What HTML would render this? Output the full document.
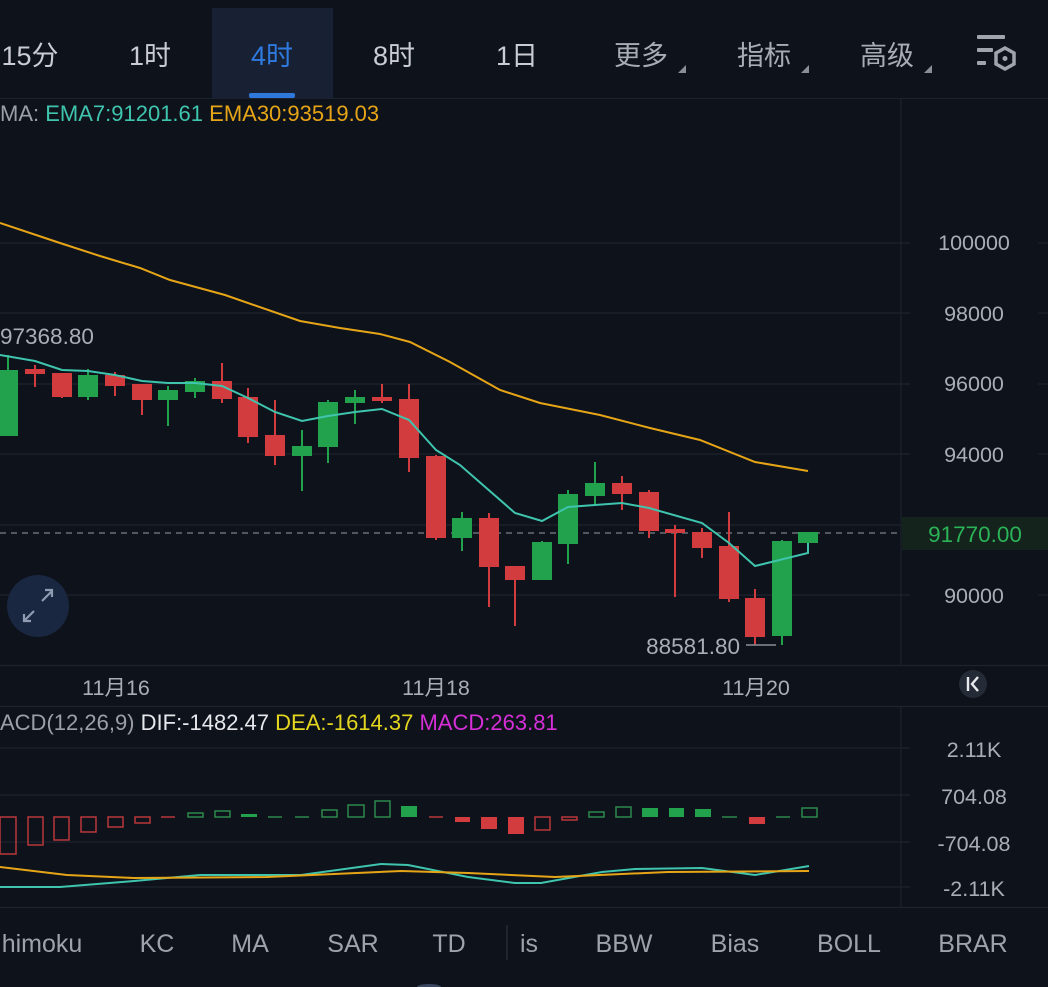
<!DOCTYPE html>
<html><head><meta charset="utf-8"><style>
html,body{margin:0;padding:0;background:#0e121b;width:1048px;height:987px;overflow:hidden}
svg{display:block}
text{font-family:"Liberation Sans","Noto Sans CJK SC",sans-serif}
</style></head><body>
<svg width="1048" height="987" viewBox="0 0 1048 987" xmlns="http://www.w3.org/2000/svg">
<rect width="1048" height="987" fill="#0e121b"/>
<rect x="212" y="8" width="121" height="90" fill="#172133"/>
<rect x="249" y="93" width="46" height="5" rx="2" fill="#2f78dc"/>
<g font-size="27" fill="#c9ccd2" text-anchor="middle">
<text x="30" y="65">15分</text>
<text x="150" y="65">1时</text>
<text x="272" y="65" fill="#2f7ae0">4时</text>
<text x="394" y="65">8时</text>
<text x="517" y="65">1日</text>
<text x="641" y="65" fill="#a8acb4">更多</text>
<text x="764" y="65" fill="#a8acb4">指标</text>
<text x="887" y="65" fill="#a8acb4">高级</text>
</g>
<g fill="#8a8e96"><path d="M678 73h8v-8z"/><path d="M801 73h8v-8z"/><path d="M924 73h8v-8z"/></g>
<g fill="#a0a4ac"><rect x="977" y="35" width="28" height="4" rx="1"/><rect x="977" y="48" width="16" height="4" rx="1"/><rect x="977" y="61" width="9" height="4" rx="1"/></g>
<path d="M1005 48l9 5v11l-9 5l-9-5v-11z" fill="none" stroke="#a0a4ac" stroke-width="3.5"/>
<circle cx="1005" cy="58.5" r="2.5" fill="#a0a4ac"/>
<line x1="0" y1="98.5" x2="1048" y2="98.5" stroke="#1c222d"/>
<text x="0" y="121" font-size="22" fill="#9ba0a8">MA: <tspan fill="#3fc4ae">EMA7:91201.61</tspan> <tspan fill="#e6a517">EMA30:93519.03</tspan></text>
<g stroke="#1d232e" stroke-width="1.2">
<line x1="0" y1="243" x2="910" y2="243"/><line x1="0" y1="313" x2="910" y2="313"/><line x1="0" y1="384" x2="910" y2="384"/><line x1="0" y1="454" x2="910" y2="454"/><line x1="0" y1="525" x2="910" y2="525"/><line x1="0" y1="595" x2="910" y2="595"/>
<line x1="1038" y1="243" x2="1048" y2="243"/><line x1="1038" y1="313" x2="1048" y2="313"/><line x1="1038" y1="384" x2="1048" y2="384"/><line x1="1038" y1="454" x2="1048" y2="454"/><line x1="1038" y1="595" x2="1048" y2="595"/>
<line x1="901" y1="98" x2="901" y2="665"/><line x1="901" y1="706" x2="901" y2="907"/>
<line x1="0" y1="665.5" x2="1048" y2="665.5"/><line x1="0" y1="706.5" x2="1048" y2="706.5"/>
<line x1="0" y1="748" x2="910" y2="748"/><line x1="0" y1="795" x2="910" y2="795"/><line x1="0" y1="842" x2="910" y2="842"/><line x1="0" y1="887" x2="910" y2="887"/>
<line x1="0" y1="907.5" x2="1048" y2="907.5"/>
</g>
<g font-size="21.5" fill="#a9adb5" text-anchor="middle">
<text x="974" y="250">100000</text><text x="974" y="321">98000</text><text x="974" y="391">96000</text><text x="974" y="462">94000</text><text x="974" y="603">90000</text>
<text x="974" y="757">2.11K</text><text x="974" y="804">704.08</text><text x="974" y="851">-704.08</text><text x="974" y="896">-2.11K</text>
<text x="116" y="695">11月16</text><text x="436" y="695">11月18</text><text x="756" y="695">11月20</text>
</g>
<line x1="0" y1="533" x2="900" y2="533" stroke="#6a6f78" stroke-width="1.5" stroke-dasharray="6 5"/>
<rect x="902" y="517" width="146" height="33" fill="#14231c"/>
<text x="975" y="542" font-size="22.5" fill="#2bb358" text-anchor="middle">91770.00</text>
<polyline fill="none" stroke="#e6a517" stroke-width="2" points="0,223 60,243 100,256 140,268 170,280 225,295 300,321 340,328 380,334 410,342 450,362 500,390 540,403 600,415 650,428 700,440 755,462 808,471"/>
<g stroke-width="2">
<g stroke="#22a24c" fill="#22a24c">
<line x1="8" y1="355" x2="8" y2="435"/><rect x="-1" y="371" width="18" height="64"/>
<line x1="88" y1="369" x2="88" y2="400"/><rect x="79" y="376" width="18" height="20"/>
<line x1="168" y1="386" x2="168" y2="426"/><rect x="159" y="391" width="18" height="8"/>
<line x1="195" y1="378" x2="195" y2="398"/><rect x="186" y="382" width="18" height="9"/>
<line x1="302" y1="430" x2="302" y2="491"/><rect x="293" y="447" width="18" height="8"/>
<line x1="328" y1="400" x2="328" y2="463"/><rect x="319" y="403" width="18" height="43"/>
<line x1="355" y1="390" x2="355" y2="424"/><rect x="346" y="398" width="18" height="4"/>
<line x1="462" y1="512" x2="462" y2="551"/><rect x="453" y="519" width="18" height="18"/>
<line x1="542" y1="541" x2="542" y2="580"/><rect x="533" y="543" width="18" height="36"/>
<line x1="568" y1="490" x2="568" y2="564"/><rect x="559" y="495" width="18" height="48"/>
<line x1="595" y1="462" x2="595" y2="505"/><rect x="586" y="484" width="18" height="11"/>
<line x1="782" y1="540" x2="782" y2="645"/><rect x="773" y="542" width="18" height="93"/>
<line x1="808" y1="533" x2="808" y2="553"/><rect x="799" y="533" width="18" height="9"/>
</g>
<g stroke="#d33c3f" fill="#d33c3f">
<line x1="35" y1="365" x2="35" y2="387"/><rect x="26" y="370" width="18" height="3"/>
<line x1="62" y1="374" x2="62" y2="398"/><rect x="53" y="374" width="18" height="22"/>
<line x1="115" y1="372" x2="115" y2="396"/><rect x="106" y="376" width="18" height="9"/>
<line x1="142" y1="385" x2="142" y2="415"/><rect x="133" y="385" width="18" height="14"/>
<line x1="222" y1="363" x2="222" y2="403"/><rect x="213" y="382" width="18" height="16"/>
<line x1="248" y1="388" x2="248" y2="443"/><rect x="239" y="398" width="18" height="38"/>
<line x1="275" y1="400" x2="275" y2="465"/><rect x="266" y="436" width="18" height="19"/>
<line x1="382" y1="384" x2="382" y2="403"/><rect x="373" y="398" width="18" height="2"/>
<line x1="409" y1="384" x2="409" y2="472"/><rect x="400" y="400" width="18" height="57"/>
<line x1="436" y1="455" x2="436" y2="540"/><rect x="427" y="457" width="18" height="80"/>
<line x1="489" y1="513" x2="489" y2="607"/><rect x="480" y="519" width="18" height="47"/>
<line x1="515" y1="567" x2="515" y2="626"/><rect x="506" y="567" width="18" height="12"/>
<line x1="622" y1="476" x2="622" y2="510"/><rect x="613" y="484" width="18" height="9"/>
<line x1="649" y1="490" x2="649" y2="538"/><rect x="640" y="493" width="18" height="37"/>
<line x1="675" y1="525" x2="675" y2="597"/><rect x="666" y="530" width="18" height="2"/>
<line x1="702" y1="528" x2="702" y2="558"/><rect x="693" y="533" width="18" height="14"/>
<line x1="729" y1="512" x2="729" y2="602"/><rect x="720" y="547" width="18" height="51"/>
<line x1="755" y1="589" x2="755" y2="645"/><rect x="746" y="599" width="18" height="37"/>
</g>
</g>
<polyline fill="none" stroke="#3fc4ae" stroke-width="2" points="0,355 35,361 62,370 88,371 115,375 142,381 168,383 195,383 222,386 248,398 275,412 302,421 328,416 355,412 382,409 409,420 436,450 460,465 515,513 542,521 568,507 622,503 649,508 702,523 729,543 755,566 808,553 808,543"/>
<text x="0" y="344" font-size="22.5" fill="#a9adb5">97368.80</text>
<text x="740" y="654" font-size="22.5" fill="#a9adb5" text-anchor="end">88581.80</text>
<line x1="746" y1="645" x2="776" y2="645" stroke="#8a8e96" stroke-width="1.5"/>
<circle cx="38" cy="606" r="31" fill="#1a2740"/>
<g stroke="#8e9bb0" stroke-width="2.2" fill="none"><path d="M42 601l10-10M45 590h7v7"/><path d="M34 611l-10 10M24 614v7h7"/></g>
<circle cx="973" cy="684" r="14" fill="#252b36"/>
<path d="M968 677v14M978 677l-6 7l6 7" stroke="#e8eaee" stroke-width="2.4" fill="none"/>
<text x="0" y="730" font-size="22" fill="#9ba0a8">ACD(12,26,9) <tspan fill="#e6e8ec">DIF:-1482.47</tspan> <tspan fill="#e4d51e">DEA:-1614.37</tspan> <tspan fill="#d62fd8">MACD:263.81</tspan></text>
<g stroke-width="1.5">
<g stroke="#b8383b" fill="none">
<rect x="0" y="817" width="16" height="37"/><rect x="28" y="817" width="15" height="28"/><rect x="54" y="817" width="15" height="23"/><rect x="81" y="817" width="15" height="15"/><rect x="108" y="817" width="15" height="10"/><rect x="135" y="817" width="15" height="6"/><line x1="161" y1="817" x2="175" y2="817"/>
<rect x="535" y="817" width="15" height="13"/><rect x="562" y="817" width="15" height="3"/><line x1="429" y1="817" x2="443" y2="817"/>
</g>
<g fill="#d33c3f"><rect x="455" y="817" width="15" height="5"/><rect x="481" y="817" width="16" height="12"/><rect x="508" y="817" width="16" height="17"/><rect x="749" y="817" width="16" height="7"/></g>
<g stroke="#2c8a4c" fill="none">
<rect x="188" y="813" width="15" height="4"/><rect x="215" y="811" width="15" height="6"/><line x1="268" y1="817" x2="282" y2="817"/><line x1="295" y1="817" x2="309" y2="817"/>
<rect x="322" y="810" width="15" height="7"/><rect x="348" y="805" width="16" height="12"/><rect x="375" y="801" width="15" height="16"/>
<rect x="589" y="812" width="15" height="5"/><rect x="616" y="807" width="15" height="10"/><line x1="722" y1="817" x2="737" y2="817"/><line x1="776" y1="817" x2="790" y2="817"/><rect x="802" y="808" width="15" height="9"/>
</g>
<g fill="#22a24c"><rect x="241" y="814" width="16" height="3"/><rect x="401" y="806" width="16" height="11"/><rect x="642" y="808" width="16" height="9"/><rect x="669" y="808" width="15" height="9"/><rect x="695" y="809" width="16" height="8"/></g>
</g>
<polyline fill="none" stroke="#3fc4ae" stroke-width="2" points="0,887 60,887 134,881 200,875 301,875 381,864 408,865 468,877 515,883 541,883 602,872 635,869 702,868 755,875 809,866"/>
<polyline fill="none" stroke="#e6a517" stroke-width="2" points="0,867 67,875 134,878 267,877 401,871 468,873 555,877 668,872 809,871"/>
<g font-size="25" fill="#9ea2aa" text-anchor="middle">
<text x="42" y="952">himoku</text><text x="157" y="952">KC</text><text x="250" y="952">MA</text><text x="353" y="952">SAR</text><text x="449" y="952">TD</text><text x="529" y="952">is</text><text x="624" y="952">BBW</text><text x="735" y="952">Bias</text><text x="849" y="952">BOLL</text><text x="973" y="952">BRAR</text>
</g>
<line x1="507" y1="925" x2="507" y2="960" stroke="#252a34" stroke-width="1.5"/>
<ellipse cx="429" cy="987" rx="12" ry="3" fill="#3a4660"/>
</svg>
</body></html>
